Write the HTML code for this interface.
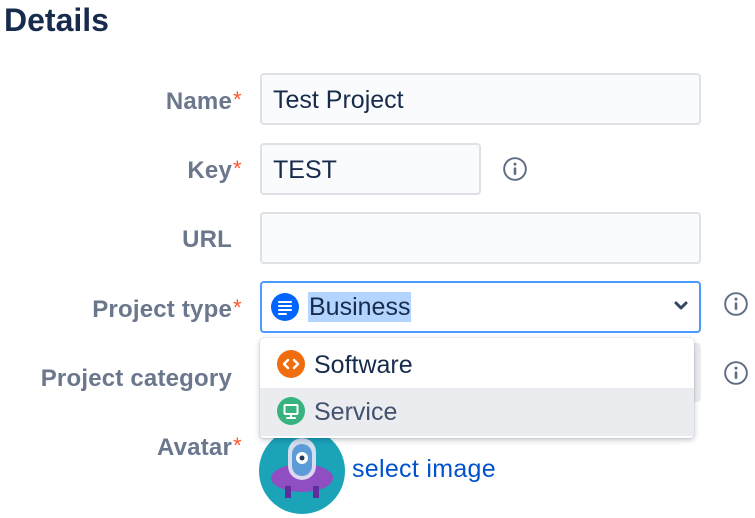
<!DOCTYPE html>
<html><head><meta charset="utf-8"><style>
*{box-sizing:border-box;margin:0;padding:0}
body{width:755px;height:518px;overflow:hidden;background:#fff;font-family:"Liberation Sans",sans-serif;position:relative}
.t{position:absolute;left:4px;top:0px;font-size:32px;font-weight:bold;color:#172B4D;line-height:40px}
.l{position:absolute;right:523px;font-size:24px;font-weight:bold;color:#6B778C;line-height:26px;white-space:nowrap;letter-spacing:0.2px}
.l b{color:#FF5630;font-weight:normal;position:absolute;left:100%;top:-2px;margin-left:1px;font-size:22px}
.in{position:absolute;left:260px;height:52px;border:2px solid #DFE1E6;background:#FAFBFC;border-radius:4px;font-size:25px;color:#172B4D;padding-left:11px;line-height:50px}
.info{position:absolute;width:26px;height:26px}
</style></head><body>
<div class="t">Details</div>
<div class="l" style="top:89px">Name<b>*</b></div>
<div class="in" style="top:73px;width:441px">Test Project</div>
<div class="l" style="top:158px">Key<b>*</b></div>
<div class="in" style="top:143px;width:221px">TEST</div>
<div class="l" style="top:227px">URL</div>
<div class="in" style="top:212px;width:441px"></div>
<div class="l" style="top:297px">Project type<b>*</b></div>
<div class="in" style="top:281px;width:441px;border-color:#4C9AFF;background:#fff;padding-left:46px;line-height:48px"><span style="background:#B3D4FF;line-height:30px;display:inline-block;padding:0 1px;vertical-align:middle;margin-top:-2px">Business</span></div>
<svg style="position:absolute;left:271px;top:293px" width="28" height="28" viewBox="0 0 28 28"><circle cx="14" cy="14" r="14" fill="#0065FF"/><g stroke="#fff" stroke-width="2" stroke-linecap="round"><line x1="8" y1="9" x2="20" y2="9"/><line x1="8" y1="13" x2="20" y2="13"/><line x1="8" y1="17" x2="20" y2="17"/><line x1="8" y1="21" x2="15" y2="21"/></g></svg>
<svg style="position:absolute;left:673px;top:300px" width="16" height="12" viewBox="0 0 16 12"><path d="M3 3l5 5 5-5" stroke="#344563" stroke-width="3" fill="none" stroke-linecap="round" stroke-linejoin="round"/></svg>
<div class="l" style="top:366px;right:523px">Project category</div>
<div style="position:absolute;left:680px;top:343px;width:21px;height:59px;background:#EBECF0;border-radius:4px"></div>
<div style="position:absolute;left:260px;top:338px;width:434px;height:100px;background:#fff;border-radius:4px;box-shadow:0 2px 6px rgba(9,30,66,.25),0 0 1px rgba(9,30,66,.3);overflow:hidden">
 <div style="height:50px;font-size:25px;color:#172B4D;line-height:54px;padding-left:54px;position:relative">Software
 <svg style="position:absolute;left:17px;top:12px" width="28" height="28" viewBox="0 0 28 28"><circle cx="14" cy="14" r="14" fill="#F06D0F"/><path d="M11 10l-4 4 4 4M17 10l4 4-4 4" stroke="#fff" stroke-width="2.4" fill="none" stroke-linecap="round" stroke-linejoin="round"/></svg></div>
 <div style="height:48px;background:#EBECF0;font-size:25px;color:#42526E;line-height:48px;padding-left:54px;position:relative">Service
 <svg style="position:absolute;left:17px;top:9px" width="28" height="28" viewBox="0 0 28 28"><circle cx="14" cy="14" r="14" fill="#36B37E"/><rect x="7.5" y="8" width="13" height="9" rx="1" fill="none" stroke="#fff" stroke-width="2"/><path d="M14 17v3M10 21h8" stroke="#fff" stroke-width="2" stroke-linecap="round"/></svg></div>
</div>
<svg class="info" style="left:502px;top:156px" viewBox="0 0 24 24"><circle cx="12" cy="12" r="10" fill="none" stroke="#5E6C84" stroke-width="1.8"/><circle cx="12" cy="7.5" r="1.4" fill="#5E6C84"/><rect x="10.8" y="10.5" width="2.4" height="7" rx="1" fill="#5E6C84"/></svg>
<svg class="info" style="left:723px;top:291px" viewBox="0 0 24 24"><circle cx="12" cy="12" r="10" fill="none" stroke="#5E6C84" stroke-width="1.8"/><circle cx="12" cy="7.5" r="1.4" fill="#5E6C84"/><rect x="10.8" y="10.5" width="2.4" height="7" rx="1" fill="#5E6C84"/></svg>
<svg class="info" style="left:723px;top:360px" viewBox="0 0 24 24"><circle cx="12" cy="12" r="10" fill="none" stroke="#5E6C84" stroke-width="1.8"/><circle cx="12" cy="7.5" r="1.4" fill="#5E6C84"/><rect x="10.8" y="10.5" width="2.4" height="7" rx="1" fill="#5E6C84"/></svg>
<div class="l" style="top:435px">Avatar<b>*</b></div>
<svg style="position:absolute;left:259px;top:428px;z-index:-1" width="86" height="86" viewBox="0 0 86 86"><circle cx="43" cy="43" r="43" fill="#1BA3B8"/><ellipse cx="43" cy="50" rx="31" ry="14" fill="#8F4FC2"/><rect x="26" y="58" width="6" height="12" fill="#5F2E9E"/><rect x="54" y="58" width="6" height="12" fill="#5F2E9E"/><rect x="29" y="10" width="28" height="42" rx="14" fill="#E8E6F5" opacity=".9"/><rect x="33" y="16" width="20" height="32" rx="10" fill="#5C9BD8"/><circle cx="43" cy="30" r="6" fill="#fff"/><circle cx="43" cy="30" r="2.5" fill="#253858"/></svg>
<div style="position:absolute;left:352px;top:455px;font-size:25px;color:#0052CC;line-height:28px;letter-spacing:0.3px">select image</div>
</body></html>
